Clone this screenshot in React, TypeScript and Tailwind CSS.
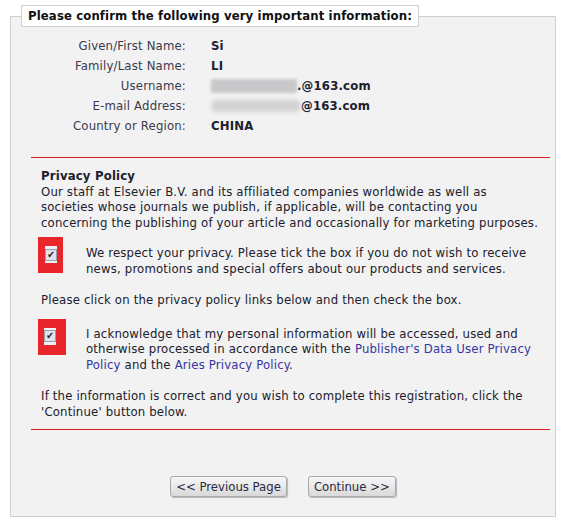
import { FC, ReactNode } from "react";

const rows: { label: string; value: ReactNode }[] = [
  { label: "Given/First Name:", value: "Si" },
  { label: "Family/Last Name:", value: "LI" },
  {
    label: "Username:",
    value: (
      <span className="flex items-center">
        <span className="inline-block h-[14px] w-[86px] bg-[#c9c9cb] blur-[1.5px]" />
        <span>.@163.com</span>
      </span>
    ),
  },
  {
    label: "E-mail Address:",
    value: (
      <span className="flex items-center">
        <span className="inline-block h-[12px] w-[90px] rounded-full bg-[#d2d2d4] blur-[2px]" />
        <span>@163.com</span>
      </span>
    ),
  },
  { label: "Country or Region:", value: "CHINA" },
];

const Tick: FC<{ wide?: boolean }> = ({ wide }) => (
  <span
    className={
      wide
        ? "flex h-[36px] w-[28px] shrink-0 items-start bg-[#e8262c] pl-[6px] pt-[9px]"
        : "flex h-[36px] w-[25px] shrink-0 items-start bg-[#e8262c] pl-[7px] pt-[9px]"
    }
  >
    <span className="flex h-[17px] w-[12px] items-center justify-center bg-[#eef0f4]">
      <span className="flex h-[12px] w-[12px] items-center justify-center border border-[#9aa0ab] bg-[#dde2ec] text-[10px] leading-none text-[#222]">
        ✔
      </span>
    </span>
  </span>
);

const Button: FC<{ children: ReactNode }> = ({ children }) => (
  <button className="h-[21px] rounded-[3px] border border-[#a9a9a9] bg-gradient-to-b from-[#f7f7f7] to-[#d9d9d9] px-[5px] text-[13px] leading-none tracking-normal text-[#2a2a40] shadow-[1px_1px_1px_rgba(0,0,0,0.25)]">
    {children}
  </button>
);

const RedRule = () => <div className="h-px bg-[#dc1820]" />;

export default function App() {
  return (
    <div className="min-h-[527px] bg-white pt-[5px] font-['DejaVu_Sans_Condensed',Tahoma,sans-serif] text-[13px] leading-[15.5px] tracking-[0.18px] text-[#20202e]">
      <fieldset className="mx-[10px] border border-[#cfcfcf] bg-[#f2f2f2] pb-[19px]">
        <legend className="ml-[10px] border border-[#cfcfcf] bg-white px-[6px] py-[2px] text-[13px] font-bold leading-[16px] tracking-[0.12px] text-[#111]">
          Please confirm the following very important information:
        </legend>

        <div className="mt-[9px] flex flex-col">
          {rows.map((r) => (
            <div key={r.label} className="flex h-[20px] items-center">
              <span className="w-[175px] text-right text-[#3a3a4c]">{r.label}</span>
              <span className="ml-[25px] font-bold">{r.value}</span>
            </div>
          ))}
        </div>

        <div className="ml-[20px] mr-[5px] mt-[21px]">
          <RedRule />
          <div className="pb-[10px] pl-[10px] pt-[10px]">
            <div className="font-bold">Privacy Policy</div>
            <p>
              Our staff at Elsevier B.V. and its affiliated companies worldwide as well as
              <br />
              societies whose journals we publish, if applicable, will be contacting you
              <br />
              concerning the publishing of your article and occasionally for marketing purposes.
            </p>

            <div className="-ml-[3px] mt-[7px] flex items-start">
              <Tick />
              <p className="ml-[23px] mt-[8px]">
                We respect your privacy. Please tick the box if you do not wish to receive
                <br />
                news, promotions and special offers about our products and services.
              </p>
            </div>

            <p className="mt-[16px]">
              Please click on the privacy policy links below and then check the box.
            </p>

            <div className="-ml-[3px] mt-[11px] flex items-start">
              <Tick wide />
              <p className="ml-[20px] mt-[7px]">
                I acknowledge that my personal information will be accessed, used and
                <br />
                otherwise processed in accordance with the{" "}
                <a className="text-[#3535a0]">Publisher's Data User Privacy</a>
                <br />
                <a className="text-[#3535a0]">Policy</a> and the{" "}
                <a className="text-[#3535a0]">Aries Privacy Policy</a>.
              </p>
            </div>

            <p className="mt-[16px]">
              If the information is correct and you wish to complete this registration, click the
              <br />
              'Continue' button below.
            </p>
          </div>
          <RedRule />
        </div>

        <div className="mt-[46px] flex justify-center gap-[21px]">
          <Button>&lt;&lt; Previous Page</Button>
          <Button>Continue &gt;&gt;</Button>
        </div>
      </fieldset>
    </div>
  );
}
